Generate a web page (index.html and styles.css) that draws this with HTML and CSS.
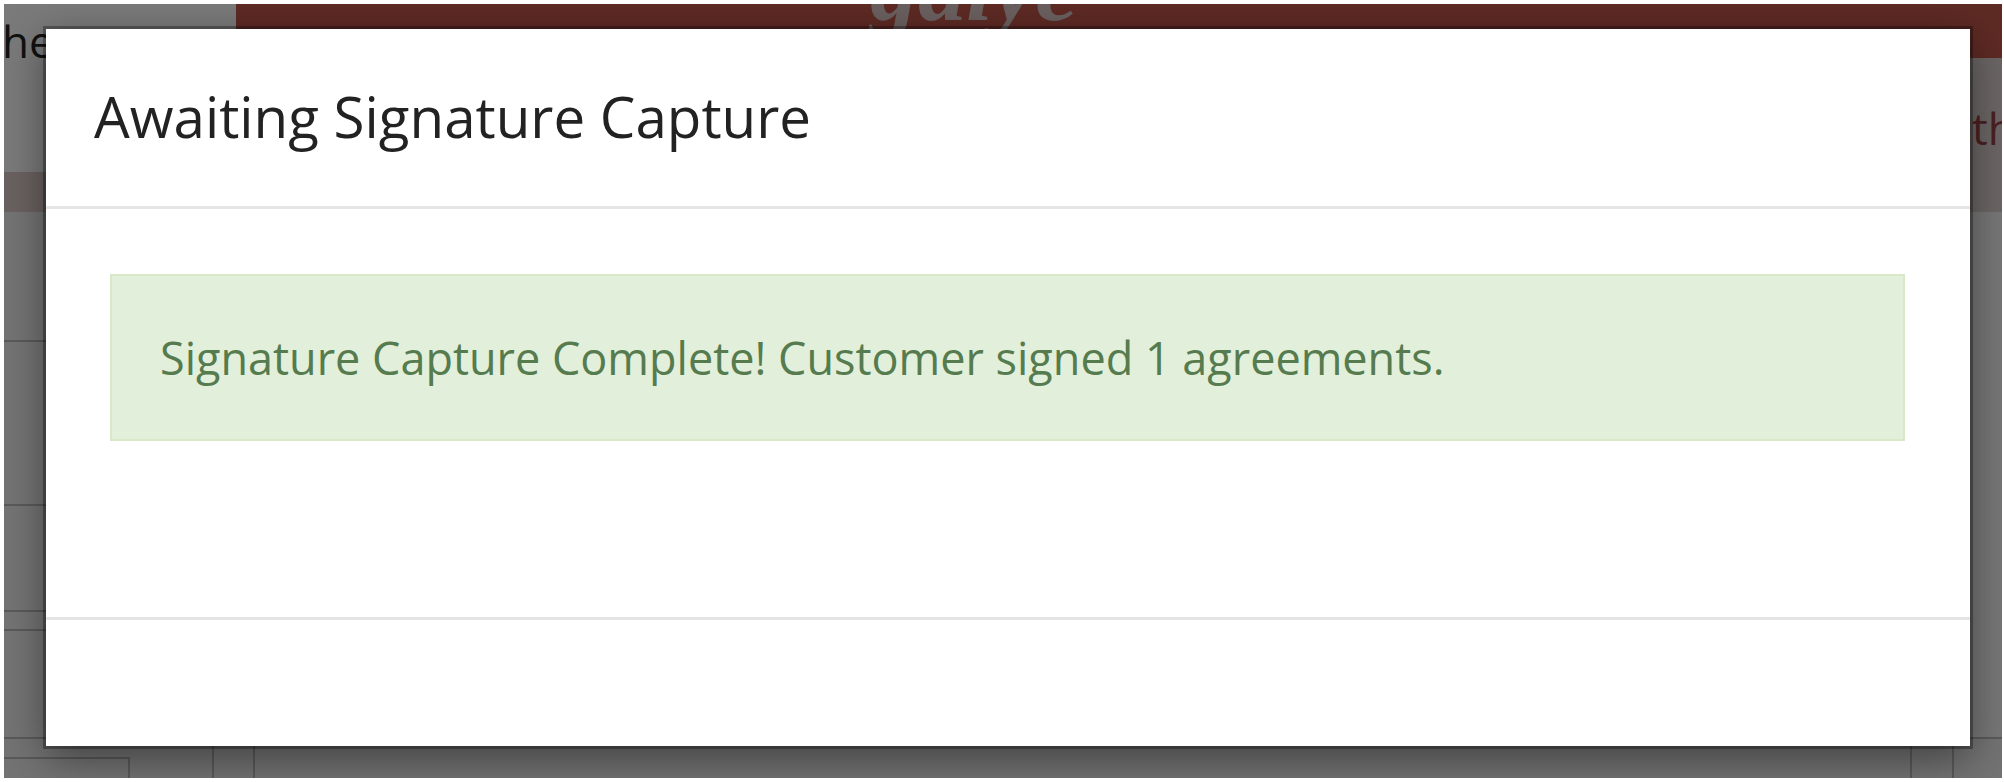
FILE: index.html
```html
<!DOCTYPE html>
<html lang="en">
<head>
<meta charset="utf-8">
<title>Awaiting Signature Capture</title>
<link rel="stylesheet" href="styles.css">
</head>
<body>
<div class="frame">
  <div class="page">
    <div class="side-top"><span class="side-title">he</span></div>
    <div class="brand-bar"><span class="brand-logo">gaiye</span></div>
    <div class="sub"><span class="sub-title">th</span></div>
    <div class="band"></div>
    <div class="side-list">
      <div class="side-row r1"></div>
      <div class="side-row r2"></div>
      <div class="side-row r3"></div>
      <div class="side-row r4"></div>
      <div class="side-row r5"></div>
    </div>
    <div class="main-content"></div>
    <div class="foot-row">
      <div class="foot-input"></div>
      <div class="foot-cell c1"></div>
      <div class="foot-cell c2"></div>
      <div class="foot-spacer"></div>
      <div class="foot-cell c3"></div>
      <div class="foot-cell c4"></div>
    </div>
  </div>
  <div class="backdrop"></div>
  <div class="modal">
    <div class="dialog">
      <div class="modal-header">
        <h4 class="modal-title">Awaiting Signature Capture</h4>
      </div>
      <div class="modal-body">
        <div class="alert-success">Signature Capture Complete! Customer signed 1 agreements.</div>
      </div>
      <div class="modal-footer"></div>
    </div>
  </div>
</div>
</body>
</html>
```

FILE: styles.css
```css
html, body {
  margin: 0;
  padding: 0;
  background: #ffffff;
}

body {
  font-family: "Open Sans", "Noto Sans", sans-serif;
}

.frame {
  position: relative;
  margin: 4px 2px 4px 4px;
  height: 774px;
  overflow: hidden;
  background: #eeeeee;
}

.page {
  display: grid;
  grid-template-columns: 232px 1fr;
  grid-template-rows: 54px 114px 40px 1fr 41px;
  height: 100%;
}

.side-top {
  grid-column: 1;
  grid-row: 1 / 3;
  background: #f4f4f4;
  overflow: hidden;
}

.side-title {
  display: block;
  margin-top: 15px;
  font-size: 44px;
  line-height: 1;
  color: #222222;
  margin-left: -2px;
}

.brand-bar {
  grid-column: 2;
  grid-row: 1;
  background: #bc5448;
  overflow: hidden;
  padding-left: 634px;
}

.brand-logo {
  display: block;
  margin-top: -64px;
  font-family: "Liberation Serif", serif;
  font-style: italic;
  font-weight: bold;
  font-size: 96px;
  line-height: 1;
  color: #d6c0c0;
}

.sub {
  grid-column: 2;
  grid-row: 2 / 4;
  background: #d6cccb;
  overflow: hidden;
  padding-left: 1736px;
}

.sub-title {
  display: block;
  margin-top: 48px;
  font-size: 44px;
  line-height: 1;
  color: #964040;
}

.band {
  grid-column: 1;
  grid-row: 3;
  background: #d4c4c0;
}

.side-list {
  grid-column: 1;
  grid-row: 4;
  background: #e8e8e8;
  display: flex;
  flex-direction: column;
}

.side-row {
  border-bottom: 2px solid #b4b4b4;
  box-sizing: border-box;
}

.r1 { height: 130px; }
.r2 { height: 164px; }
.r3 { height: 106px; }
.r4 { height: 19px; }
.r5 { flex: 1; border-bottom: none; }

.main-content {
  grid-column: 2;
  grid-row: 4;
  background: #eeeeee;
}

.foot-row {
  grid-column: 1 / 3;
  grid-row: 5;
  border-top: 2px solid #b4b4b4;
  display: flex;
  background: #e6e6e6;
}

.foot-input {
  width: 124px;
  margin-top: 18px;
  border-top: 2px solid #b4b4b4;
  border-right: 2px solid #b4b4b4;
}

.foot-cell {
  border-right: 2px solid #b4b4b4;
}

.c1 { width: 82px; }
.c2 { width: 39px; }
.foot-spacer { flex: 1; border-right: 2px solid #b4b4b4; }
.c3 { width: 40px; }
.c4 { width: 48px; border-right: none; }

.backdrop {
  position: absolute;
  inset: 0;
  background: rgba(0, 0, 0, 0.5);
}

.modal {
  position: absolute;
  inset: 0;
}

.dialog {
  margin: 25px 32px 0 42px;
  height: 717px;
  background: #ffffff;
  display: flex;
  flex-direction: column;
  box-shadow: 0 0 0 3px rgba(0, 0, 0, 0.3), 0 12px 40px rgba(0, 0, 0, 0.45);
}

.modal-header {
  height: 177px;
  border-bottom: 3px solid #e5e5e5;
  display: flex;
  align-items: center;
  padding-left: 48px;
}

.modal-title {
  margin: 0;
  font-size: 56.5px;
  font-weight: 400;
  line-height: 1.1;
  color: #222222;
}

.modal-body {
  height: 408px;
  box-sizing: border-box;
  padding: 65px 65px 0 64px;
}

.alert-success {
  height: 167px;
  box-sizing: border-box;
  border: 2px solid #d8e8c8;
  background: #e2efda;
  color: #557b4e;
  font-size: 45px;
  line-height: 1.2;
  display: flex;
  align-items: center;
  padding-left: 48px;
}

.modal-footer {
  height: 126px;
  border-top: 3px solid #e5e5e5;
}
```
